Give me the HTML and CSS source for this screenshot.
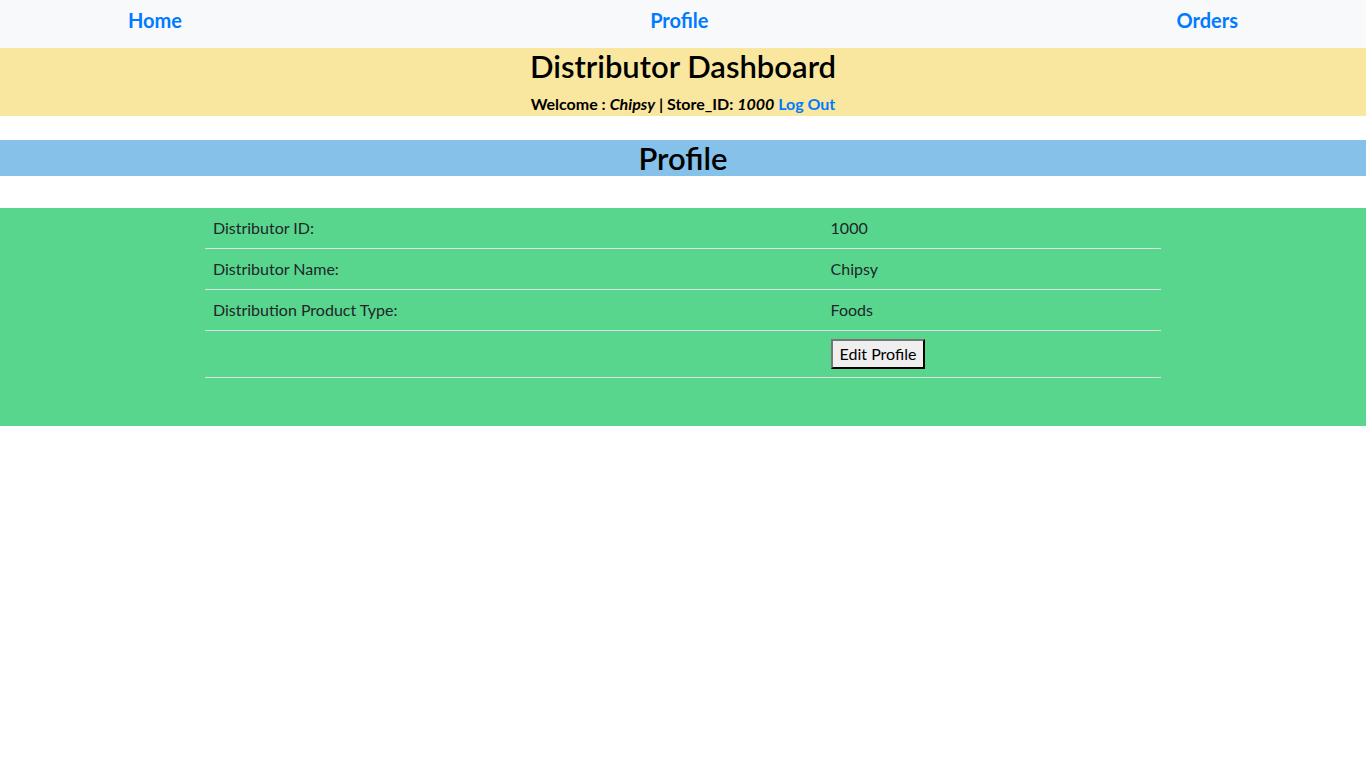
FILE: index.html
```html
<!DOCTYPE html>
<html lang="en">
<head>
<meta charset="utf-8">
<title>Distributor Dashboard</title>
<link rel="stylesheet" href="styles.css">
</head>
<body>
<nav class="topnav">
  <a class="nav-link" href="#">Home</a>
  <a class="nav-link" href="#">Profile</a>
  <a class="nav-link" href="#">Orders</a>
</nav>
<header class="dash-header">
  <h1 class="dash-title">Distributor Dashboard</h1>
  <div class="welcome">Welcome : <em>Chipsy</em> | Store_ID: <em>1000</em> <a class="logout" href="#">Log Out</a></div>
</header>
<section class="section-title">
  <h2>Profile</h2>
</section>
<section class="profile">
  <table class="profile-table">
    <tbody>
      <tr><td class="label">Distributor ID:</td><td>1000</td></tr>
      <tr><td class="label">Distributor Name:</td><td>Chipsy</td></tr>
      <tr><td class="label">Distribution Product Type:</td><td>Foods</td></tr>
      <tr><td class="label"></td><td><button class="edit-btn" type="button">Edit Profile</button></td></tr>
    </tbody>
  </table>
</section>
</body>
</html>
```

FILE: styles.css
```css
* { box-sizing: border-box; }
html, body { margin: 0; padding: 0; }
body {
  font-family: Lato, "Open Sans", sans-serif;
  font-size: 16px;
  line-height: 1.5;
  color: #212529;
  background: #fff;
}
.topnav {
  background: #f8f9fa;
  display: flex;
  justify-content: space-between;
  padding: 5px 128px 7px;
  height: 48px;
}
.nav-link {
  color: #007bff;
  font-weight: 700;
  font-size: 20px;
  line-height: 30px;
  text-decoration: none;
}
.dash-header {
  background: #f9e79f;
  text-align: center;
  color: #000;
  height: 68px;
}
.dash-title {
  margin: 0 0 8px;
  font-size: 31px;
  line-height: 36px;
  font-weight: 600;
}
.welcome {
  font-weight: 700;
  font-size: 16px;
  line-height: 24px;
}
.welcome em { font-style: italic; }
.logout { color: #007bff; text-decoration: none; }
.section-title {
  background: #85c1e9;
  margin-top: 24px;
  text-align: center;
  color: #000;
}
.section-title h2 {
  margin: 0;
  font-size: 31px;
  line-height: 36px;
  font-weight: 600;
}
.profile {
  background: #58d68d;
  margin-top: 32px;
  padding-bottom: 48px;
}
.profile-table {
  width: 70%;
  margin: 0 auto;
  border-collapse: collapse;
}
.profile-table td {
  padding: 8px;
  border-bottom: 1px solid #dee2e6;
  vertical-align: top;
  text-align: left;
}
.profile-table td.label { width: 64.6%; }
.edit-btn {
  font-family: inherit;
  font-size: 16px;
  line-height: 1.5;
  color: #000;
  background: #efefef;
  border: 2px outset #767676;
  border-color: #767676 #222 #222 #767676;
  padding: 1px 7px;
  margin: 0;
}
```
